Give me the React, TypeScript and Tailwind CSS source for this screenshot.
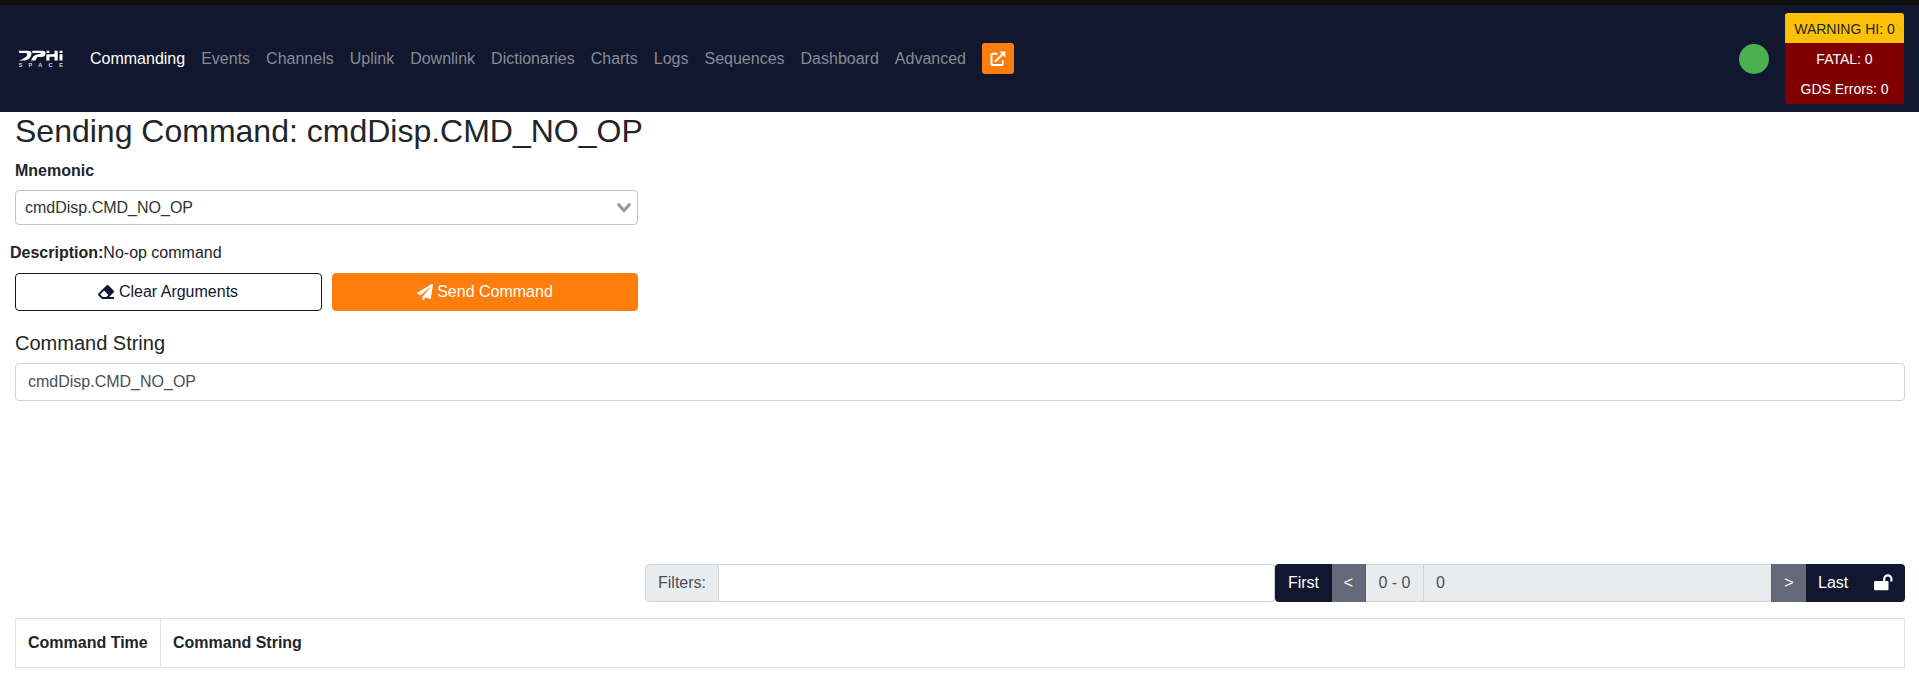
import React from "react";
import { FaEraser, FaPaperPlane } from "react-icons/fa";

const links = ["Commanding", "Events", "Channels", "Uplink", "Downlink", "Dictionaries", "Charts", "Logs", "Sequences", "Dashboard", "Advanced"];

function Logo() {
  return (
    <svg width="46" height="18" viewBox="0 0 46 18" className="shrink-0" fill="#fff">
      <path d="M.5.800h9c3 0 4.300 1.500 4 3.200C13 7.800 9.800 10.600 6 10.600H.8C3 10 5 9 6.500 7.800 8 6.800 9.200 5.800 9.200 4.400c0-.9-.8-1.300-2-1.300H1.500z" />
      <path d="M14.300.800H24c2.600 0 3.800 1.100 3.600 2.600-.2 2.200-1.800 3.600-4.400 3.600h-4L17.500 10.600h-4.600l2.500-4.400c2-1.200 4.800-2 7.400-2.600l.3-.6h-8.800z" />
      <path d="M28.500.800h2.800v2.100h-2.800zM36.500.8h3.200v9.800h-3.200V6.800h-5v3.800h-3.200V4.400l8.200-.4z" />
      <path d="M41.600.800h2.900v2.100h-2.900zM41.600 4.200h2.900v6.400h-2.900z" />
      <text x="0.800 10.600 20.300 30.600 41.300" y="16.500" fontSize="5.500" fontWeight="700" fill="#d5d7dd" fontFamily="Liberation Sans, sans-serif">SPACE</text>
    </svg>
  );
}

function ExternalLink() {
  return (
    <svg width="16" height="16" viewBox="0 0 16 16" className="block">
      <path d="M7.500 2.800H2.300a.8.8 0 0 0-.8.800v9.600c0 .4.300.8.800.8h9.600c.4 0 .8-.4.800-.8V9.300" fill="none" stroke="#fff" strokeWidth="2" />
      <path d="M5 10.700l7.500-7.500" stroke="#fff" strokeWidth="2.200" />
      <path d="M9.300.6H15.300v5.800z" fill="#fff" />
    </svg>
  );
}

function LockOpen() {
  return (
    <svg width="19" height="17" viewBox="0 0 19 17" className="block">
      <rect x="0" y="7" width="14.500" height="9.300" rx="1.300" fill="#fff" />
      <path d="M10.200 8V5a3.600 3.600 0 0 1 7.200 0V7.600" fill="none" stroke="#fff" strokeWidth="2.200" />
    </svg>
  );
}

export default function App() {
  return (
    <div className="h-[687px] w-full overflow-hidden bg-white font-['Liberation_Sans',Arial,sans-serif] text-base leading-6 text-[#212529]">
      <div className="h-[5px] bg-[#101010]" />
      <header className="flex h-[107px] items-center bg-[#11172e] pr-[15px] pl-[18px]">
        <Logo />
        <nav className="ml-[18px] flex items-center">
          {links.map((l, i) => (
            <a key={l} className={i === 0 ? "px-2 text-white" : "px-2 text-[#888b96]"}>{l}</a>
          ))}
          <button className="ml-2 flex h-[31px] w-8 items-center justify-center rounded-[3px] bg-[#fd7e0d]">
            <ExternalLink />
          </button>
        </nav>
        <div className="ml-auto h-[30px] w-[30px] rounded-full bg-[#4caf50]" />
        <div className="ml-4 flex h-[91px] w-[119px] flex-col overflow-hidden rounded-[3px] bg-[#800000] text-center text-sm text-white">
          <div className="h-[30px] bg-[#ffc107] pt-[6px] text-[#212529]">WARNING HI: 0</div>
          <div className="h-[30px] pt-[6px]">FATAL: 0</div>
          <div className="pt-[6px]">GDS Errors: 0</div>
        </div>
      </header>

      <main className="pr-[14px] pl-[15px]">
        <h2 className="h-[46px] text-[32px] leading-[38.4px]">Sending Command: cmdDisp.CMD_NO_OP</h2>
        <label className="block h-8 pt-px font-bold">Mnemonic</label>
        <div className="flex h-[35px] w-[623px] items-center justify-between rounded border border-[#c4c4c4] pr-1.5 pl-[9px] text-[#333]">
          <span>cmdDisp.CMD_NO_OP</span>
          <svg width="14" height="10" viewBox="0 0 14 10" fill="none" stroke="#999" strokeWidth="3.200" strokeLinecap="round" strokeLinejoin="round">
            <path d="M1.800 1.800L7 7.600l5.200-5.800" />
          </svg>
        </div>
        <div className="-ml-[5px] pt-4 pb-2"><b>Description:</b>No-op command</div>
        <div className="flex w-[623px] gap-2.5">
          <button className="flex h-[38px] flex-1 items-center justify-center gap-[4.5px] rounded border border-[#11172e] text-[#11172e]">
            <FaEraser size={16} />Clear Arguments
          </button>
          <button className="flex h-[38px] flex-1 items-center justify-center gap-[4.5px] rounded border border-[#fd7e0d] bg-[#fd7e0d] text-white">
            <FaPaperPlane size={16} />Send Command
          </button>
        </div>
        <h5 className="pt-5 pb-2 text-xl leading-6">Command String</h5>
        <div className="h-[38px] rounded border border-[#ced4da] px-3 pt-1.5 text-[#495057]">cmdDisp.CMD_NO_OP</div>

        <div className="mt-[163px] ml-[630px] flex h-[38px] text-[#495057]">
          <div className="w-[74px] rounded-l border border-[#ced4da] bg-[#e9ecef] px-3 pt-1.5">Filters:</div>
          <div className="w-[556px] rounded-r border border-l-0 border-[#ced4da]" />
          <div className="w-[57px] rounded-l bg-[#11172e] pt-[7px] text-center text-white">First</div>
          <div className="w-[34px] border-r border-[#575b6d] bg-[#666979] pt-[7px] text-center text-white">&lt;</div>
          <div className="w-[58px] border-y border-r border-[#ced4da] bg-[#e9ecef] pt-1.5 text-center">0 - 0</div>
          <div className="flex-1 border-y border-[#ced4da] bg-[#e9ecef] px-3 pt-1.5">0</div>
          <div className="w-[35px] border-l border-[#575b6d] bg-[#666979] pt-[7px] text-center text-white">&gt;</div>
          <div className="flex w-[99px] justify-between rounded-r bg-[#11172e] px-3 pt-[7px] text-white">
            <span>Last</span>
            <span className="pt-[3px]"><LockOpen /></span>
          </div>
        </div>

        <div className="mt-4 flex h-[50px] border border-[#dee2e6] font-bold">
          <div className="w-[145px] border-r border-[#dee2e6] px-3 pt-3">Command Time</div>
          <div className="px-3 pt-3">Command String</div>
        </div>
      </main>
    </div>
  );
}
